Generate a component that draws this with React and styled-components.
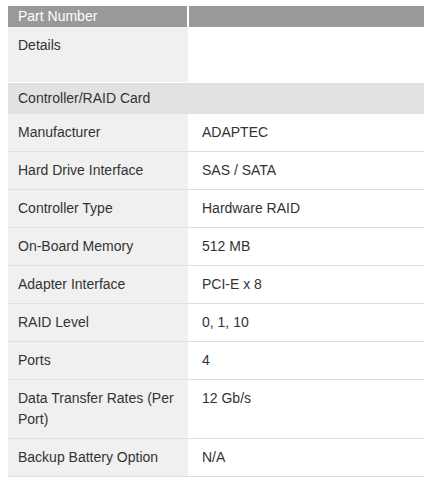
import React from "react";
import styled, { createGlobalStyle } from "styled-components";

const GlobalStyle = createGlobalStyle`
  html, body {
    margin: 0;
    padding: 0;
    background: #fff;
    overflow: hidden;
  }
  body {
    font-family: "Liberation Sans", Arial, sans-serif;
    font-size: 14px;
    color: #333;
  }
`;

const SpecTable = styled.div`
  margin: 6px 0 0 8px;
  width: 416px;
`;

const HeadRow = styled.div`
  display: grid;
  grid-template-columns: 179px 1fr;
  column-gap: 2px;
`;

const HeadCell = styled.div`
  background-color: #999999;
  color: #fff;
  height: 21px;
  line-height: 21px;
  padding: 0 10px;
`;

const Row = styled.div`
  display: grid;
  grid-template-columns: 180px 1fr;
  line-height: 21px;
  border-bottom: 1px solid ${(p) => (p.$plain ? "#fff" : "#dfdfdf")};
  min-height: ${(p) => (p.$tall ? "55px" : "auto")};
`;

const Label = styled.div`
  background-color: #f0f0f0;
  padding: 8px 10px;
`;

const Value = styled.div`
  padding: 8px 14px;
`;

const GroupRow = styled.div`
  background-color: #e2e2e2;
  line-height: 21px;
  padding: 5px 10px;
`;

const specs = [
  ["Manufacturer", "ADAPTEC"],
  ["Hard Drive Interface", "SAS / SATA"],
  ["Controller Type", "Hardware RAID"],
  ["On-Board Memory", "512 MB"],
  ["Adapter Interface", "PCI-E x 8"],
  ["RAID Level", "0, 1, 10"],
  ["Ports", "4"],
  ["Data Transfer Rates (Per Port)", "12 Gb/s"],
  ["Backup Battery Option", "N/A"],
];

export default function App() {
  return (
    <>
      <GlobalStyle />
      <SpecTable>
        <HeadRow>
          <HeadCell>Part Number</HeadCell>
          <HeadCell />
        </HeadRow>
        <Row $plain $tall>
          <Label>Details</Label>
          <Value />
        </Row>
        <GroupRow>Controller/RAID Card</GroupRow>
        {specs.map(([label, value]) => (
          <Row key={label}>
            <Label>{label}</Label>
            <Value>{value}</Value>
          </Row>
        ))}
      </SpecTable>
    </>
  );
}
